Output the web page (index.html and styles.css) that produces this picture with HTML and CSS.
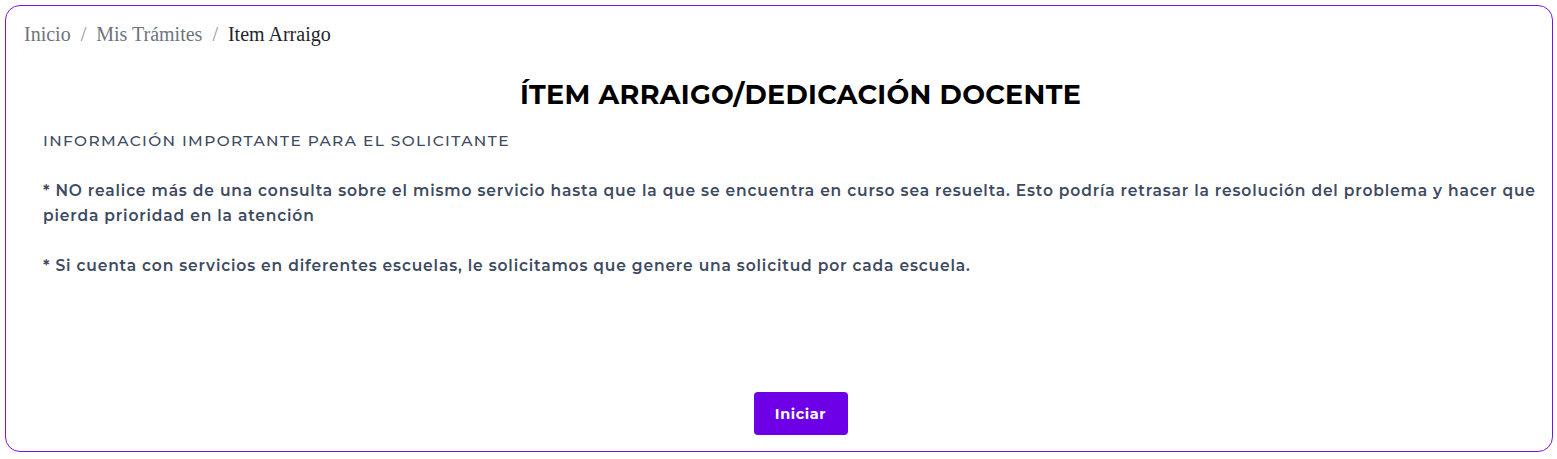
FILE: index.html
```html
<!DOCTYPE html>
<html lang="es">
<head>
<meta charset="utf-8">
<title>Ítem Arraigo</title>
<link rel="stylesheet" href="styles.css">
</head>
<body>
<div class="card">
  <nav class="breadcrumb">
    <a class="crumb" href="#">Inicio</a><span class="sep">/</span><a class="crumb" href="#">Mis Trámites</a><span class="sep">/</span><span class="crumb current">Item Arraigo</span>
  </nav>
  <div class="content">
    <h1 class="title">ÍTEM ARRAIGO/DEDICACIÓN DOCENTE</h1>
    <div class="info">
      <p class="info-head">INFORMACIÓN IMPORTANTE PARA EL SOLICITANTE</p>
      <p class="info-text">* NO realice más de una consulta sobre el mismo servicio hasta que la que se encuentra en curso sea resuelta. Esto podría retrasar la resolución del problema y hacer que pierda prioridad en la atención</p>
      <p class="info-text">* Si cuenta con servicios en diferentes escuelas, le solicitamos que genere una solicitud por cada escuela.</p>
    </div>
    <div class="actions">
      <button class="btn" type="button">Iniciar</button>
    </div>
  </div>
</div>
</body>
</html>
```
FILE: styles.css
```css
html, body {
  margin: 0;
  padding: 0;
  background: #ffffff;
}
body {
  padding: 5px 4px 7px 5px;
}
.card {
  box-sizing: border-box;
  height: 447px;
  border: 1px solid #7a12e6;
  border-radius: 15px;
  display: flex;
  flex-direction: column;
  padding: 14px 0 16px 0;
}
.breadcrumb {
  font-family: "Liberation Serif", "Times New Roman", serif;
  font-size: 20px;
  line-height: 28px;
  padding-left: 18px;
  color: #6c757d;
}
.crumb {
  color: #6c757d;
  text-decoration: none;
}
.crumb.current {
  color: #212529;
}
.sep {
  padding: 0 10px;
  color: #8a939b;
}
.content {
  flex: 1;
  display: flex;
  flex-direction: column;
  margin-left: 37px;
  margin-right: -6px;
}
.title {
  margin: 30px 0 0 0;
  text-align: center;
  font-family: "Montserrat", "Lato", "Noto Sans", sans-serif;
  font-weight: 700;
  font-size: 27px;
  line-height: 34px;
  color: #000000;
  letter-spacing: 0.3px;
}
.info {
  margin-top: 16px;
  font-family: "Montserrat", "Open Sans", sans-serif;
  color: #3e4a5f;
  width: 1506px;
}
.info p {
  margin: 0 0 25px 0;
  font-size: 15.5px;
  line-height: 25px;
  font-weight: 600;
  letter-spacing: 0.84px;
}
.info .info-head {
  font-size: 15.4px;
  font-weight: 500;
  letter-spacing: 1.4px;
}
.actions {
  margin-top: auto;
  display: flex;
  justify-content: center;
}
.btn {
  width: 94px;
  height: 43px;
  border: none;
  border-radius: 4px;
  background: #6d00e6;
  color: #ffffff;
  font-family: "Montserrat", "Lato", sans-serif;
  font-weight: 700;
  font-size: 14.5px;
  letter-spacing: 0.6px;
}
```
